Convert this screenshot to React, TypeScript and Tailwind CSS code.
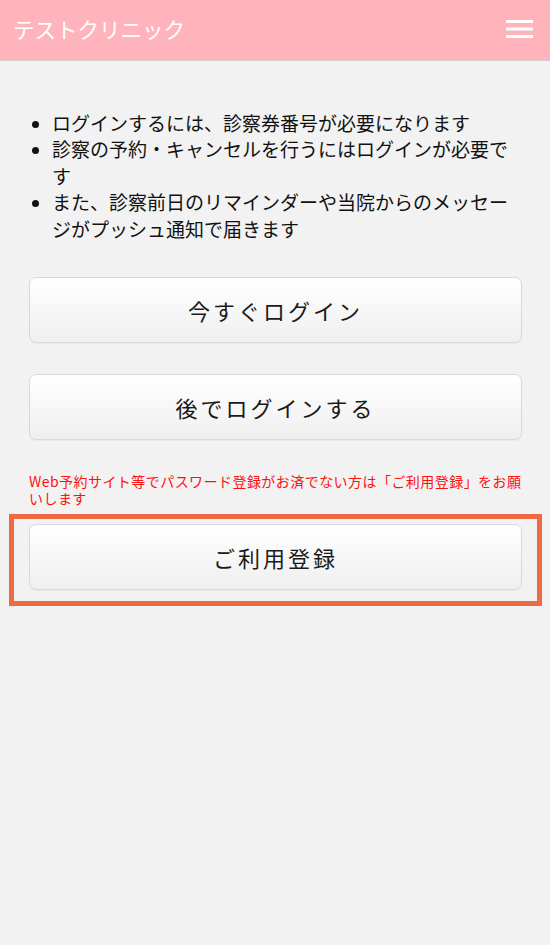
import React from "react";

const jp = { fontFamily: '"Noto Sans CJK JP", "Noto Sans", sans-serif' };

function Bullet({ children }: { children: React.ReactNode }) {
  return (
    <li className="flex">
      <span className="w-[23px] shrink-0 flex justify-start pl-[3px] pt-[11px]">
        <span className="block w-[7px] h-[7px] rounded-full bg-[#111]" />
      </span>
      <span className="flex-1">{children}</span>
    </li>
  );
}

function Btn({ label }: { label: string }) {
  return (
    <button
      type="button"
      className="w-full h-[66px] rounded-[7px] border border-[#d9d9d9] bg-gradient-to-b from-[#ffffff] to-[#efefef] text-[22px] tracking-[3px] text-[#1a1a1a] flex items-center justify-center shadow-[0_1px_1px_rgba(0,0,0,0.04)]"
      style={jp}
    >
      {label}
    </button>
  );
}

export default function App() {
  return (
    <div className="w-[550px] min-h-[945px] bg-[#f2f2f2]" style={jp}>
      <header className="h-[61px] bg-[#ffb3bb] border-b border-[#cfcfcf] flex items-center justify-between pl-[13px] pr-[17px]">
        <h1 className="text-[21.5px] font-normal text-white leading-none pb-[2px]">
          テストクリニック
        </h1>
        <svg width="27" height="18" viewBox="0 0 27 18" className="mb-[3px]">
          <rect x="0" y="0" width="27" height="3" fill="#ffffff" />
          <rect x="0" y="7.5" width="27" height="3" fill="#ffffff" />
          <rect x="0" y="15" width="27" height="3" fill="#ffffff" />
        </svg>
      </header>

      <main className="px-[29px] pr-[28px] pt-[49px]">
        <ul className="text-[19px] leading-[26.4px] text-[#111]">
          <Bullet>ログインするには、診察券番号が必要になります</Bullet>
          <Bullet>診察の予約・キャンセルを行うにはログインが必要です</Bullet>
          <Bullet>また、診察前日のリマインダーや当院からのメッセージがプッシュ通知で届きます</Bullet>
        </ul>

        <div className="mt-[35px]">
          <Btn label="今すぐログイン" />
        </div>
        <div className="mt-[31px]">
          <Btn label="後でログインする" />
        </div>

        <p className="mt-[33px] text-[14px] leading-[17px] tracking-[0.45px] text-[#ff1010]">
          Web予約サイト等でパスワード登録がお済でない方は「ご利用登録」をお願いします
        </p>

        <div className="mt-[7px] -mx-[20px] border-[5px] border-[#ed6a43] pt-[5px] pb-[11px] px-[15px]">
          <Btn label="ご利用登録" />
        </div>
      </main>
    </div>
  );
}
